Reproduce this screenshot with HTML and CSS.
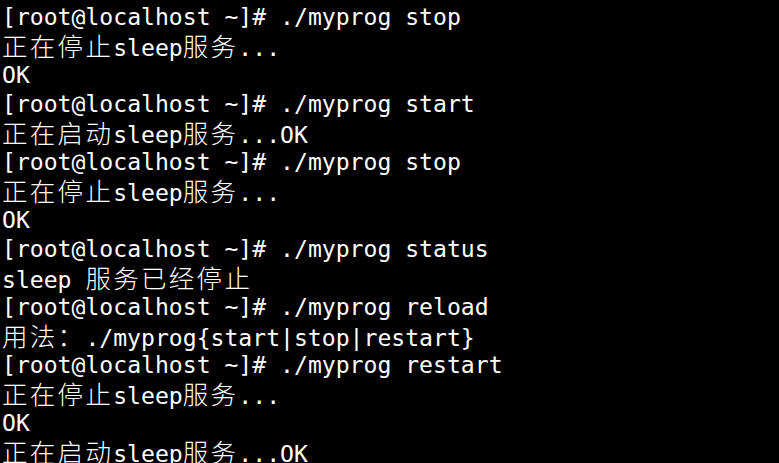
FILE: index.html
```html
<!DOCTYPE html>
<html>
<head>
<meta charset="utf-8">
<link rel="stylesheet" href="styles.css">
</head>
<body>
<div class="term">
<div class="ln">[root@localhost ~]# ./myprog stop</div>
<div class="ln"><span class="w">正在停止</span>sleep<span class="w">服务</span>...</div>
<div class="ln">OK</div>
<div class="ln">[root@localhost ~]# ./myprog start</div>
<div class="ln"><span class="w">正在启动</span>sleep<span class="w">服务</span>...OK</div>
<div class="ln">[root@localhost ~]# ./myprog stop</div>
<div class="ln"><span class="w">正在停止</span>sleep<span class="w">服务</span>...</div>
<div class="ln">OK</div>
<div class="ln">[root@localhost ~]# ./myprog status</div>
<div class="ln">sleep <span class="w">服务已经停止</span></div>
<div class="ln">[root@localhost ~]# ./myprog reload</div>
<div class="ln"><span class="w">用法：</span>./myprog{start|stop|restart}</div>
<div class="ln">[root@localhost ~]# ./myprog restart</div>
<div class="ln"><span class="w">正在停止</span>sleep<span class="w">服务</span>...</div>
<div class="ln">OK</div>
<div class="ln"><span class="w">正在启动</span>sleep<span class="w">服务</span>...OK</div>
</div>
</body>
</html>
```
FILE: styles.css
```css
html, body {
  margin: 0;
  padding: 0;
  background: #000;
  overflow: hidden;
}
.term {
  padding: 3px 0 0 2px;
  font-family: "DejaVu Sans Mono", "Noto Sans CJK SC", monospace;
  font-size: 23.1px;
  line-height: 29px;
  color: #fff;
}
.ln {
  height: 29px;
  white-space: pre;
}
.w {
  font-family: "Noto Sans CJK SC", sans-serif;
  font-size: 25.5px;
  font-weight: 300;
  line-height: 1;
  letter-spacing: 2.3px;
}
```
